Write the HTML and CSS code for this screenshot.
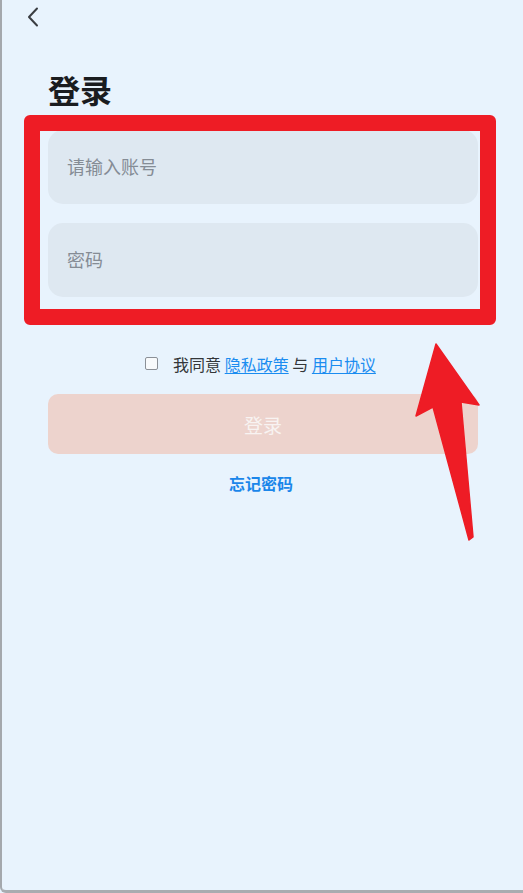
FILE: index.html
```html
<!DOCTYPE html>
<html lang="zh-CN">
<head>
<meta charset="utf-8">
<title>登录</title>
<link rel="stylesheet" href="styles.css">
</head>
<body>
<div class="screen">
  <header class="topbar">
    <button class="back" aria-label="返回">
      <svg width="14" height="20" viewBox="0 0 14 20"><path d="M11 1.5 L3 10 L11 18.5" fill="none" stroke="#3a3d42" stroke-width="2" stroke-linecap="round" stroke-linejoin="round"/></svg>
    </button>
  </header>
  <h1 class="title">登录</h1>
  <div class="fields">
    <div class="field"><span class="placeholder">请输入账号</span></div>
    <div class="field"><span class="placeholder">密码</span></div>
  </div>
  <div class="agree">
    <span class="checkbox"></span>
    <span class="agree-text">我同意 <a class="link">隐私政策</a> 与 <a class="link">用户协议</a></span>
  </div>
  <div class="actions">
    <button class="login">登录</button>
  </div>
  <div class="forgot">忘记密码</div>

  <div class="highlight"></div>
  <svg class="arrow" width="523" height="893" viewBox="0 0 523 893">
    <polygon points="436,344 479,405 461,402 473,537 469,540 433,407 416,416" fill="#ee1c25" stroke="#ee1c25" stroke-width="1.5" stroke-linejoin="round"/>
  </svg>
</div>
</body>
</html>
```
FILE: styles.css
```css
* { box-sizing: border-box; }
html, body { margin: 0; padding: 0; }
body {
  font-family: "Noto Sans CJK SC", "Noto Sans", sans-serif;
  background: #e8f3fd;
}
.screen {
  position: relative;
  width: 523px;
  height: 893px;
  background: #e8f3fd;
  border-left: 2px solid #a4a8ad;
  border-bottom: 3px solid #a9acb0;
  border-bottom-left-radius: 6px;
  overflow: hidden;
}
.topbar {
  height: 36px;
  padding: 7px 0 0 24px;
}
.back {
  border: 0;
  background: none;
  padding: 0;
  width: 14px;
  height: 20px;
  display: block;
}
.title {
  margin: 32px 0 0 46px;
  font-size: 32px;
  line-height: 42px;
  font-weight: 700;
  color: #1a1c1f;
  letter-spacing: 0;
}
.fields {
  margin: 20px 45px 0 46px;
  display: flex;
  flex-direction: column;
  gap: 19px;
}
.field {
  height: 74px;
  border-radius: 15px;
  background: #dee8f1;
  display: flex;
  align-items: center;
  padding-left: 19px;
  padding-bottom: 3px;
}
.placeholder {
  font-size: 18px;
  color: #858c95;
}
.agree {
  margin-top: 56px;
  display: flex;
  align-items: center;
  justify-content: center;
  gap: 15px;
  padding-right: 4px;
  height: 22px;
}
.checkbox {
  width: 13px;
  height: 13px;
  border: 1px solid #8b9097;
  border-radius: 2px;
  background: #f8fafc;
  margin-top: -2px;
}
.agree-text {
  font-size: 16px;
  color: #333639;
}
.link {
  color: #1a8cf0;
  text-decoration: underline;
  text-underline-offset: 2px;
}
.actions {
  margin: 19px 45px 0 46px;
}
.login {
  width: 100%;
  height: 60px;
  border: 0;
  border-radius: 10px;
  background: #edd3cd;
  color: #f8f3f2;
  font-family: inherit;
  font-size: 19px;
  display: block;
}
.forgot {
  margin-top: 17px;
  text-align: center;
  font-size: 16px;
  font-weight: 700;
  color: #1a86ea;
  padding-right: 3px;
}
.highlight {
  position: absolute;
  left: 22px;
  top: 115px;
  width: 472px;
  height: 210px;
  border: 16px solid #ee1c25;
  border-radius: 6px;
}
.arrow {
  position: absolute;
  left: -2px;
  top: 0;
}
```
